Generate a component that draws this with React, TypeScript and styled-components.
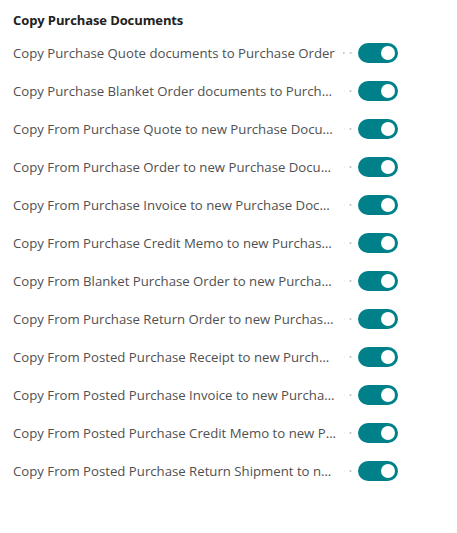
import React from "react";
import styled, { createGlobalStyle } from "styled-components";

const GlobalStyle = createGlobalStyle`
  html, body {
    margin: 0;
    padding: 0;
    background: #ffffff;
  }
  body {
    font-family: "Segoe UI", "Open Sans", "Noto Sans", sans-serif;
  }
`;

const Group = styled.section`
  display: flex;
  flex-direction: column;
  padding: 8px 0 0 13px;
  width: 400px;
`;

const GroupTitle = styled.h2`
  margin: 0 0 2px;
  height: 24px;
  line-height: 24px;
  font-size: 13px;
  letter-spacing: -0.1px;
  font-weight: 700;
  color: #212121;
`;

const Row = styled.div`
  display: flex;
  align-items: center;
  height: 38px;
`;

const Caption = styled.div`
  display: flex;
  align-items: center;
  width: 341px;
  min-width: 0;
`;

const Label = styled.span`
  flex: 0 1 auto;
  min-width: 0;
  white-space: nowrap;
  overflow: hidden;
  text-overflow: ellipsis;
  font-size: 13.2px;
  color: #505050;
  line-height: 20px;
`;

/* dotted leader between caption and value, dots anchored to the right edge */
const Leader = styled.span`
  flex: 1 0 10px;
  height: 2px;
  margin-left: 8px;
  background-image: radial-gradient(circle, #c2c2c2 0.9px, transparent 1.2px);
  background-size: 7px 2px;
  background-position: right center;
  background-repeat: repeat-x;
`;

const Toggle = styled.span<{ $on: boolean }>`
  position: relative;
  display: inline-block;
  flex: none;
  width: 40px;
  height: 20px;
  margin-left: 4px;
  border-radius: 10px;
  background: ${(p) => (p.$on ? "#00818a" : "#ffffff")};
  box-sizing: border-box;

  &::after {
    content: "";
    position: absolute;
    top: 3px;
    ${(p) => (p.$on ? "right: 3px;" : "left: 3px;")}
    width: 14px;
    height: 14px;
    border-radius: 50%;
    background: ${(p) => (p.$on ? "#ffffff" : "#505050")};
  }
`;

const settings = [
  "Copy Purchase Quote documents to Purchase Order",
  "Copy Purchase Blanket Order documents to Purchase Order",
  "Copy From Purchase Quote to new Purchase Document",
  "Copy From Purchase Order to new Purchase Document",
  "Copy From Purchase Invoice to new Purchase Document",
  "Copy From Purchase Credit Memo to new Purchase Document",
  "Copy From Blanket Purchase Order to new Purchase Document",
  "Copy From Purchase Return Order to new Purchase Document",
  "Copy From Posted Purchase Receipt to new Purchase Document",
  "Copy From Posted Purchase Invoice to new Purchase Document",
  "Copy From Posted Purchase Credit Memo to new Purchase Document",
  "Copy From Posted Purchase Return Shipment to new Purchase Document",
];

export default function App() {
  return (
    <>
      <GlobalStyle />
      <Group>
        <GroupTitle>Copy Purchase Documents</GroupTitle>
        {settings.map((s) => (
          <Row key={s}>
            <Caption>
              <Label title={s}>{s}</Label>
              <Leader />
            </Caption>
            <Toggle $on role="switch" aria-checked="true" aria-label={s} />
          </Row>
        ))}
      </Group>
    </>
  );
}
